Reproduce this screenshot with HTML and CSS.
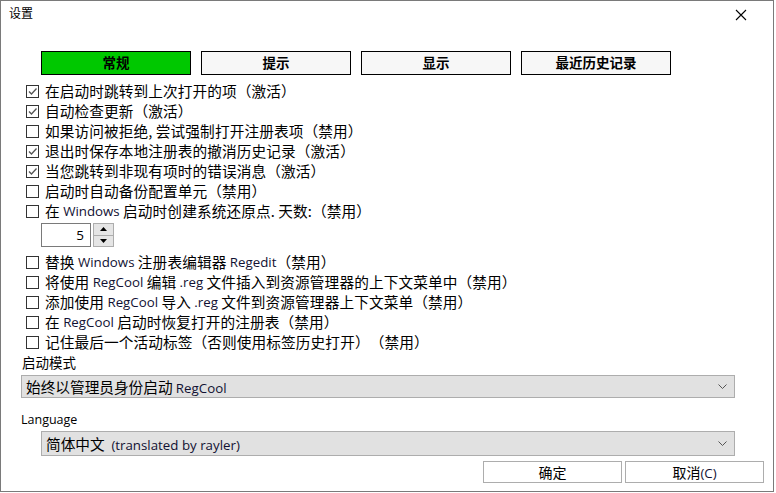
FILE: index.html
```html
<!DOCTYPE html>
<html lang="zh">
<head>
<meta charset="utf-8">
<title>设置</title>
<link rel="stylesheet" href="styles.css">
</head>
<body>
<div class="window">
  <div class="titlebar">
    <span class="title">设置</span>
    <svg class="close" width="12" height="12" viewBox="0 0 12 12"><path d="M1 1L11 11M11 1L1 11" stroke="#000" stroke-width="1.1" fill="none"/></svg>
  </div>
  <div class="tabs">
    <div class="tab active">常规</div>
    <div class="tab">提示</div>
    <div class="tab">显示</div>
    <div class="tab">最近历史记录</div>
  </div>
  <div class="options">
    <div class="row"><span class="cb on"><svg viewBox="0 0 11 11"><path d="M2 5.5L4.5 8L9.5 2.5" /></svg></span>在启动时跳转到上次打开的项（激活）</div>
    <div class="row"><span class="cb on"><svg viewBox="0 0 11 11"><path d="M2 5.5L4.5 8L9.5 2.5" /></svg></span>自动检查更新（激活）</div>
    <div class="row"><span class="cb"></span>如果访问被拒绝, 尝试强制打开注册表项（禁用）</div>
    <div class="row"><span class="cb on"><svg viewBox="0 0 11 11"><path d="M2 5.5L4.5 8L9.5 2.5" /></svg></span>退出时保存本地注册表的撤消历史记录（激活）</div>
    <div class="row"><span class="cb on"><svg viewBox="0 0 11 11"><path d="M2 5.5L4.5 8L9.5 2.5" /></svg></span>当您跳转到非现有项时的错误消息（激活）</div>
    <div class="row"><span class="cb"></span>启动时自动备份配置单元（禁用）</div>
    <div class="row"><span class="cb"></span>在 <span class="lat">Windows</span> 启动时创建系统还原点. 天数:（禁用）</div>
    <div class="spinner">
      <div class="spin-input">5</div>
      <div class="spin-btns">
        <div class="spin-btn"><svg width="7" height="4" viewBox="0 0 7 4"><path d="M0 4L3.5 0L7 4Z" fill="#000"/></svg></div>
        <div class="spin-btn"><svg width="7" height="4" viewBox="0 0 7 4"><path d="M0 0L3.5 4L7 0Z" fill="#000"/></svg></div>
      </div>
    </div>
    <div class="row"><span class="cb"></span>替换 <span class="lat">Windows</span> 注册表编辑器 <span class="lat">Regedit</span>（禁用）</div>
    <div class="row"><span class="cb"></span>将使用 <span class="lat">RegCool</span> 编辑 <span class="lat">.reg</span> 文件插入到资源管理器的上下文菜单中（禁用）</div>
    <div class="row"><span class="cb"></span>添加使用 <span class="lat">RegCool</span> 导入 <span class="lat">.reg</span> 文件到资源管理器上下文菜单（禁用）</div>
    <div class="row"><span class="cb"></span>在 <span class="lat">RegCool</span> 启动时恢复打开的注册表（禁用）</div>
    <div class="row"><span class="cb"></span>记住最后一个活动标签（否则使用标签历史打开）（禁用）</div>
  </div>
  <div class="label mode-label">启动模式</div>
  <div class="select mode-select">
    <span>始终以管理员身份启动 <span class="lat">RegCool</span></span>
    <svg class="chev" width="9" height="5" viewBox="0 0 9 5"><path d="M0.5 0.5L4.5 4.5L8.5 0.5" stroke="#555" fill="none"/></svg>
  </div>
  <div class="label lang-label">Language</div>
  <div class="select lang-select">
    <span>简体中文 <span class="lat">&nbsp;(translated by rayler)</span></span>
    <svg class="chev" width="9" height="5" viewBox="0 0 9 5"><path d="M0.5 0.5L4.5 4.5L8.5 0.5" stroke="#555" fill="none"/></svg>
  </div>
  <div class="buttons">
    <div class="btn">确定</div>
    <div class="btn">取消<span class="lat">(C)</span></div>
  </div>
</div>
</body>
</html>
```

FILE: styles.css
```css
html, body {
  margin: 0;
  padding: 0;
  background: #ffffff;
}
body {
  font-family: "Noto Sans CJK SC", "Noto Sans", sans-serif;
  color: #000;
  text-spacing-trim: space-all;
}
.window {
  box-sizing: border-box;
  width: 774px;
  height: 492px;
  border: 1px solid #7a7a7a;
  background: #fff;
  display: flex;
  flex-direction: column;
}
.titlebar {
  height: 29px;
  display: flex;
  align-items: center;
  justify-content: space-between;
  padding: 0 26px 0 8px;
}
.title {
  font-size: 12px;
  line-height: 14px;
  margin-top: -6px;
}
.close {
  margin-top: -1px;
}
.tabs {
  display: flex;
  gap: 10px;
  margin-top: 21px;
  padding-left: 40px;
}
.tab {
  box-sizing: border-box;
  width: 150px;
  height: 24px;
  border: 1.5px solid #000;
  background: #f7f7f7;
  font-size: 13.5px;
  font-weight: 700;
  line-height: 21px;
  text-align: center;
}
.tab.active {
  background: #00c800;
}
.options {
  margin-top: 6px;
  display: flex;
  flex-direction: column;
}
.row {
  height: 20px;
  line-height: 20px;
  font-size: 14.67px;
  letter-spacing: 0.1px;
  display: flex;
  align-items: center;
  padding-left: 25px;
  white-space: pre;
}
.lat {
  font-family: "Open Sans", "Noto Sans", sans-serif;
  font-size: 13.3px;
  letter-spacing: 0;
  color: #111133;
}
.cb {
  box-sizing: border-box;
  width: 13px;
  height: 13px;
  border: 1px solid #333;
  background: #fff;
  margin-right: 6px;
  display: flex;
  align-items: center;
  justify-content: center;
  flex: none;
}
.cb svg {
  width: 11px;
  height: 11px;
}
.cb svg path {
  stroke: #555;
  stroke-width: 1.3;
  fill: none;
}
.spinner {
  display: flex;
  margin: 2px 0 5px 40px;
  height: 24px;
}
.spin-input {
  box-sizing: border-box;
  width: 50px;
  height: 24px;
  border: 1px solid #7a7a7a;
  text-align: right;
  padding-right: 6px;
  font-family: "Open Sans", sans-serif;
  font-size: 13.5px;
  line-height: 22px;
}
.spin-btns {
  margin-left: 2px;
  width: 21px;
  display: flex;
  flex-direction: column;
  border: 1px solid #adadad;
  box-sizing: border-box;
}
.spin-btn {
  flex: 1;
  background: #e5e5e5;
  display: flex;
  align-items: center;
  justify-content: center;
}
.spin-btn + .spin-btn {
  border-top: 1px solid #adadad;
}
.label {
  font-size: 13.5px;
}
.mode-label {
  height: 20px;
  line-height: 20px;
  padding-left: 21px;
}
.select {
  box-sizing: border-box;
  background: #e1e1e1;
  border: 1px solid #adadad;
  display: flex;
  align-items: center;
  justify-content: space-between;
  font-size: 14.67px;
  padding: 0 6px 0 4px;
  width: 714px;
}
.mode-select {
  margin: 3px 0 0 20px;
  height: 23px;
}
.lang-label {
  font-family: "Open Sans", sans-serif;
  font-size: 12.5px;
  height: 18px;
  line-height: 18px;
  padding-left: 20px;
  margin-top: 13px;
}
.lang-select {
  margin: 2px 0 0 40px;
  width: 694px;
  height: 25px;
}
.chev {
  margin-right: 1px;
}
.buttons {
  display: flex;
  justify-content: flex-end;
  gap: 3px;
  margin-top: 5px;
  padding-right: 9px;
}
.btn {
  box-sizing: border-box;
  width: 139px;
  height: 22px;
  border: 1px solid #adadad;
  background: #fff;
  text-align: center;
  font-size: 14px;
  line-height: 20px;
}
```
